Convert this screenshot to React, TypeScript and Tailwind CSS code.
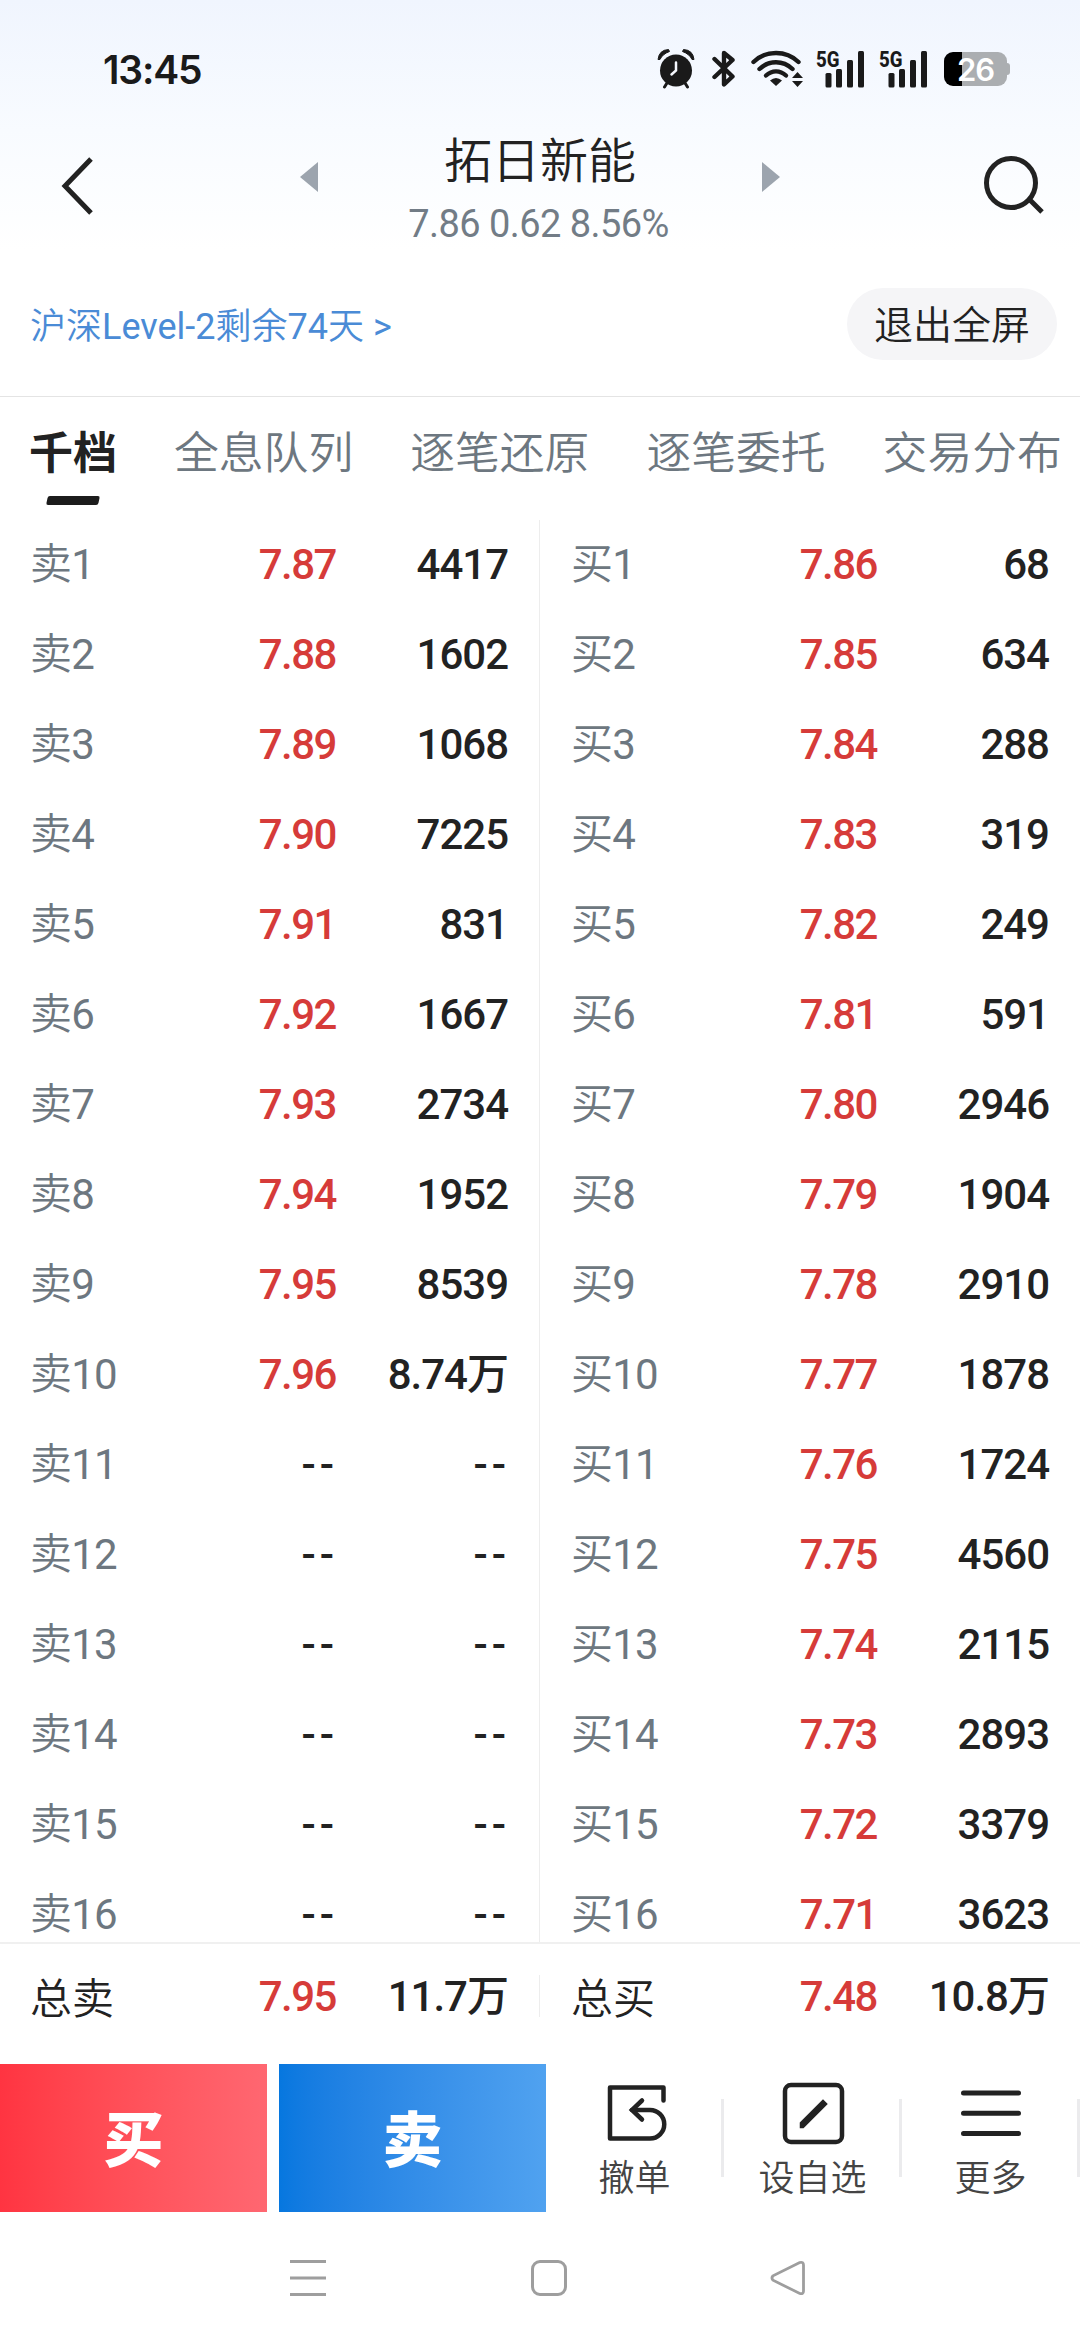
import React from "react";

const asks = [
  "7.87 4417", "7.88 1602", "7.89 1068", "7.90 7225", "7.91 831", "7.92 1667", "7.93 2734", "7.94 1952",
  "7.95 8539", "7.96 8.74万", "-- --", "-- --", "-- --", "-- --", "-- --", "-- --",
];
const bids = [
  "7.86 68", "7.85 634", "7.84 288", "7.83 319", "7.82 249", "7.81 591", "7.80 2946", "7.79 1904",
  "7.78 2910", "7.77 1878", "7.76 1724", "7.75 4560", "7.74 2115", "7.73 2893", "7.72 3379", "7.71 3623",
];

function Signal() {
  return (
    <svg width="50" height="48" viewBox="0 -4 50 48" className="shrink-0 overflow-visible" fill="#1a1a1a">
      <text x="0" y="17.500" fontSize="22.500" fontWeight="800" fontFamily="Roboto, sans-serif" textLength="23.500" lengthAdjust="spacingAndGlyphs">5G</text>
      <rect x="9.5" y="24" width="6" height="14.500" rx="1.5" />
      <rect x="20" y="20" width="6" height="18.500" rx="1.5" />
      <rect x="31" y="11" width="6" height="27.500" rx="1.5" />
      <rect x="42" y="2" width="6" height="36.500" rx="1.5" />
    </svg>
  );
}

function StatusBar() {
  return (
    <div className="flex h-[138px] items-center pl-[103px] pr-[70px]">
      <div className="flex-1 font-[Inter,sans-serif] text-[39px] leading-none font-semibold tracking-[-1.200px] text-[#1a1a1a]">13:45</div>
      <svg width="38" height="40" viewBox="0 0 38 40" className="mr-[17px] shrink-0">
        <circle cx="19" cy="21.5" r="16" fill="#1a1a1a" />
        <path d="M1 10.500 Q2 1 11.500 0.500 L12.500 2.500 Q5.500 5 3 10.500 Z M37 10.500 Q36 1 26.500 0.500 L25.500 2.500 Q32.500 5 35 10.500 Z" fill="#1a1a1a" stroke="#1a1a1a" strokeLinejoin="round" />
        <path d="M10 34 L7.5 38 M28 34 L30.500 38" stroke="#1a1a1a" strokeWidth="3" strokeLinecap="round" />
        <path d="M19 13.500 V21.500 L14.500 25.500" stroke="#f5f8fe" strokeWidth="2.500" fill="none" strokeLinecap="round" />
      </svg>
      <svg width="24" height="40" viewBox="0 0 24 40" className="mr-[15px] shrink-0">
        <path d="M2.500 10 L20.500 27.500 L12 35.500 V4 L20.500 11 L2.500 28" stroke="#1a1a1a" strokeWidth="4.400" fill="none" strokeLinecap="round" strokeLinejoin="round" />
      </svg>
      <svg width="52" height="40" viewBox="0 0 52 40" className="mr-[13px] shrink-0">
        <g stroke="#1a1a1a" strokeWidth="4.400" fill="none" strokeLinecap="round">
          <path d="M2.500 13 C15 1 35 1 47.500 13" />
          <path d="M8.500 20 C18 11 32 11 41.500 20" />
          <path d="M15 26.500 C21 21 29 21 35 26.500" />
        </g>
        <path d="M19 31.500 Q25 26.500 31 31.500 L25 37 Z" fill="#1a1a1a" />
        <path d="M41 29 L46.500 23 L52 29 Z M41 32 L46.500 38 L52 32 Z" fill="#1a1a1a" />
      </svg>
      <Signal />
      <div className="w-[13px]" />
      <Signal />
      <div className="ml-[15px] flex items-center">
        <div className="flex h-[34px] w-[63px] items-center justify-center rounded-[9px] bg-[linear-gradient(90deg,#000_18px,#abaeb1_18px)] font-[Inter,sans-serif] text-[31px] leading-none font-semibold tracking-[-1px] text-white">26</div>
        <div className="h-[12px] w-[3px] rounded-r-[3px] bg-[#abaeb1]" />
      </div>
    </div>
  );
}

function Header() {
  return (
    <div className="flex h-[128px] justify-between pl-[60px] pr-[34px]">
      <svg width="34" height="60" viewBox="0 0 34 60" className="mt-[18px]">
        <path d="M31 3 L5 30 L31 57" stroke="#222" strokeWidth="5" fill="none" />
      </svg>
      <div className="ml-[4px] flex w-[480px] justify-between">
        <svg width="18" height="30" viewBox="0 0 18 30" className="mt-[24px]"><path d="M18 0 V30 L0 15 Z" fill="#9ca4ae" /></svg>
        <div className="-mx-8 flex flex-col items-center whitespace-nowrap">
          <div className="text-[48px] leading-[48px] font-[350] text-[#222]">拓日新能</div>
          <div className="mt-[18px] mr-[3px] font-[Roboto,sans-serif] text-[38px] leading-[40px] tracking-[-0.550px] text-[#727c86]">7.86 0.62 8.56%</div>
        </div>
        <svg width="18" height="30" viewBox="0 0 18 30" className="mt-[24px]"><path d="M0 0 V30 L18 15 Z" fill="#9ca4ae" /></svg>
      </div>
      <svg width="64" height="64" viewBox="0 0 64 64" className="mt-[16px]">
        <circle cx="29" cy="29" r="24.500" stroke="#222" strokeWidth="5" fill="none" />
        <path d="M46 44 L60 58" stroke="#222" strokeWidth="5" />
      </svg>
    </div>
  );
}

function Row({ label, level, price, volume, total }: { label: string; level?: number; price: string; volume: string; total?: boolean }) {
  return (
    <div className="flex h-[90px] shrink-0 items-center text-[42px] leading-[90px] whitespace-nowrap">
      <div className={total ? "mt-[5px] w-[150px] font-[350] text-[#222]" : "w-[150px] font-[350] tracking-[-0.800px] text-[#6d7780]"}>
        {label}
        {level && <span className="font-normal">{level}</span>}
      </div>
      <div className={price === "--" ? "-mr-[2px] w-[158px] text-right font-medium tracking-[4px] text-[#222]" : "w-[156px] text-right font-medium tracking-[-1.500px] text-[#d63b39]"}>{price}</div>
      <div className={volume === "--" ? "-mr-[3px] w-[174px] text-right font-medium tracking-[4px] text-[#222]" : "w-[172px] text-right font-medium tracking-[-1px] text-[#222]"}>{volume}</div>
    </div>
  );
}

function Book({ side, rows }: { side: string; rows: string[] }) {
  return (
    <div className="flex flex-1 flex-col overflow-hidden pl-[30px]">
      {rows.map((r, i) => {
        const [price, volume] = r.split(" ");
        return <Row key={i} label={side} level={i + 1} price={price} volume={volume} />;
      })}
    </div>
  );
}

function Action({ label, children }: { label: string; children: React.ReactNode }) {
  return (
    <div className="flex flex-1 items-center">
      <div className="flex flex-1 flex-col items-center pt-[3px] pl-[2px]">
        <svg width="64" height="64" viewBox="0 0 64 64" fill="none" stroke="#222" strokeWidth="4.500">{children}</svg>
        <div className="mt-[14px] text-[36px] leading-[40px] font-[350] text-[#444]">{label}</div>
      </div>
      <div className="h-[78px] w-[3px] bg-[#ebebed]" />
    </div>
  );
}

export default function App() {
  const tabs = ["千档", "全息队列", "逐笔还原", "逐笔委托", "交易分布"];
  return (
    <div className="flex h-[2344px] w-[1080px] flex-col overflow-hidden bg-[linear-gradient(180deg,#f0f5fe_0px,#f8fbff_130px,#ffffff_250px)] font-[Roboto,'Noto_Sans_CJK_SC',sans-serif]">
      <StatusBar />
      <Header />
      <div className="flex h-[130px] shrink-0 items-center justify-between pl-[30px] pr-[23px] pb-[14px]">
        <div className="pt-[5px] text-[36px] leading-none text-[#4a8bd6]">
          <span className="font-[350]">沪深</span>Level-2<span className="font-[350]">剩余</span>74<span className="font-[350]">天</span> &gt;
        </div>
        <div className="flex h-[72px] w-[210px] items-center justify-center rounded-full bg-[#f5f5f7] pt-[4px] text-[39px] leading-none font-[350] text-[#222]">退出全屏</div>
      </div>
      <div className="h-px shrink-0 bg-[#e4e4e4]" />
      <div className="flex h-[123px] shrink-0 gap-[57px] pl-[29px] whitespace-nowrap">
        {tabs.map((t, i) => (
          <div key={t} className="flex flex-col items-center">
            <div className={i === 0 ? "mt-[32px] text-[44px] leading-[50px] font-bold text-[#222]" : "mt-[32px] text-[44.800px] leading-[50px] font-[350] text-[#6d7780]"}>{t}</div>
            {i === 0 && <div className="mt-[17px] h-[9px] w-[52px] -skew-x-12 rounded-[2px] bg-[#1c1c1c]" />}
          </div>
        ))}
      </div>
      <div className="flex h-[1422px] shrink-0 overflow-hidden">
        <div className="flex w-[539px] shrink-0"><Book side="卖" rows={asks} /></div>
        <div className="w-px bg-[#ededed]" />
        <div className="ml-[1px] flex flex-1"><Book side="买" rows={bids} /></div>
      </div>
      <div className="h-[2px] shrink-0 bg-[#f0f0f0]" />
      <div className="flex h-[120px] shrink-0">
        <div className="w-[539px] pt-[8px] pl-[30px]"><Row label="总卖" price="7.95" volume="11.7万" total /></div>
        <div className="mt-[31px] h-[42px] w-px bg-[#ededed]" />
        <div className="ml-[1px] pt-[8px] pl-[30px]"><Row label="总买" price="7.48" volume="10.8万" total /></div>
      </div>
      <div className="flex h-[148px] shrink-0 text-[60px] font-black text-white">
        <div className="mr-[12px] flex w-[267px] items-center justify-center bg-linear-to-r from-[#ff3441] to-[#ff6771] pt-[8px]">买</div>
        <div className="flex w-[267px] items-center justify-center bg-linear-to-r from-[#0677df] to-[#50a2f0] pt-[8px]">卖</div>
        <div className="flex flex-1 font-normal">
          <Action label="撤单">
            <path d="M60.500 19.500 V6.500 H7 V57.500 H47 A14.200 14.200 0 0 0 47 29 H29" strokeLinejoin="round" strokeLinecap="round" />
            <path d="M39 19.500 L29 29 L39 38.500" strokeLinecap="round" />
          </Action>
          <Action label="设自选">
            <rect x="4" y="4" width="57" height="57" rx="6" />
            <path d="M20 46 V42 L42 20 L45 23 L22 46 Z" fill="#222" strokeWidth="2.500" />
          </Action>
          <Action label="更多">
            <path d="M4.500 12 H59.500 M4.500 32.300 H59.500 M4.500 52.600 H59.500" strokeWidth="5" strokeLinecap="round" />
          </Action>
        </div>
      </div>
      <div className="flex flex-1 pt-[48px] pl-[290px]">
        <svg width="36" height="36" viewBox="0 0 36 36" className="mr-[205px]"><path d="M0 1.500 H36 M0 18 H36 M0 34.500 H36" stroke="#9e9e9e" strokeWidth="3" /></svg>
        <div className="mr-[203px] h-[36px] w-[36px] rounded-[9px] border-3 border-[#9e9e9e]" />
        <svg width="36" height="36" viewBox="0 0 36 36"><path d="M29.800 2.500 L3 15.800 Q1 18 3 20.200 L29.800 33.500 Q33.500 34.500 33.500 31 V5 Q33.500 1.500 29.800 2.500 Z" stroke="#9e9e9e" strokeWidth="2.800" fill="none" /></svg>
      </div>
    </div>
  );
}
